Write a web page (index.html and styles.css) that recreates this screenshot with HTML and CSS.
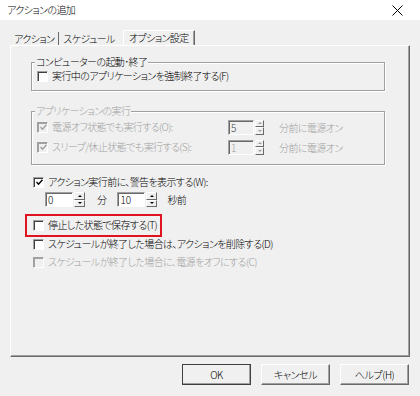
FILE: index.html
```html
<!DOCTYPE html>
<html lang="ja">
<head>
    <meta charset="UTF-8">
    <title>アクションの追加</title>
    <link rel="stylesheet" href="styles.css">
</head>
<body>
<div class="window">
    <div class="titlebar">
        <span class="title">アクションの追加</span>
        <svg class="close" width="11" height="11" viewBox="0 0 11 11"><path d="M0.5 0.5L10.5 10.5M10.5 0.5L0.5 10.5" stroke="#000" stroke-width="1"/></svg>
    </div>

    <div class="tabs">
        <span class="tab sep">アクション</span>
        <span class="tab">スケジュール</span>
        <span class="tab active">オプション設定</span>
    </div>

    <div class="panel">
        <fieldset class="group first">
            <legend>コンピューターの起動･終了</legend>
            <label class="check"><span class="box"></span>実行中のアプリケーションを強制終了する(F)</label>
        </fieldset>

        <fieldset class="group second disabled">
            <legend>アプリケーションの実行</legend>
            <div class="grow">
                <label class="check"><span class="box checked"><svg width="7" height="7" viewBox="0 0 7 7"><path d="M0.5 3L2.5 5.2L6.5 0.8" fill="none" stroke="#a0a0a0" stroke-width="1.4"/></svg></span>電源オフ状態でも実行する(O):</label>
                <span class="spin small"><span class="edit dark">5</span><span class="arrows"><i class="up"></i><i class="down"></i></span></span>
                <span class="unit">分前に電源オン</span>
            </div>
            <div class="grow">
                <label class="check"><span class="box checked"><svg width="7" height="7" viewBox="0 0 7 7"><path d="M0.5 3L2.5 5.2L6.5 0.8" fill="none" stroke="#a0a0a0" stroke-width="1.4"/></svg></span>スリープ/休止状態でも実行する(S):</label>
                <span class="spin small"><span class="edit">1</span><span class="arrows"><i class="up"></i><i class="down"></i></span></span>
                <span class="unit">分前に電源オン</span>
            </div>
        </fieldset>

        <label class="check line warn"><span class="box"><svg width="7" height="7" viewBox="0 0 7 7"><path d="M0.5 3L2.5 5.2L6.5 0.8" fill="none" stroke="#000" stroke-width="1.4"/></svg></span>アクション実行前に、警告を表示する(W):</label>

        <div class="timer">
            <span class="spin"><span class="edit">0</span><span class="arrows"><i class="up"></i><i class="down"></i></span></span>
            <span class="lbl-min">分</span>
            <span class="spin"><span class="edit">10</span><span class="arrows"><i class="up"></i><i class="down"></i></span></span>
            <span class="lbl-sec">秒前</span>
        </div>

        <div class="mark">
            <label class="check"><span class="box"></span>停止した状態で保存する(T)</label>
        </div>

        <label class="check line"><span class="box"></span>スケジュールが終了した場合は、アクションを削除する(D)</label>
        <label class="check line off last"><span class="box"></span>スケジュールが終了した場合に、電源をオフにする(C)</label>
    </div>

    <div class="buttons">
        <button class="btn default">OK</button>
        <button class="btn">キャンセル</button>
        <button class="btn">ヘルプ(H)</button>
    </div>
</div>
</body>
</html>
```

FILE: styles.css
```css
body { margin: 0; font-family: "Noto Sans CJK JP", sans-serif; font-size: 10px; font-weight: 300; letter-spacing: -0.6px; font-feature-settings: "palt"; color: #000; }
.window { width: 420px; height: 396px; background: #f0f0f0; overflow: hidden; }

.titlebar { height: 20px; background: #fff; display: flex; align-items: center; justify-content: space-between; padding: 0 17px 0 7px; }
.title { line-height: 12px; }

.tabs { display: flex; align-items: flex-end; height: 15px; margin: 10px 0 0 10px; }
.tab { line-height: 13px; padding: 0 4px; }
.tab.sep { border-right: 1px solid #696969; }
.tab.active { line-height: 14px; padding: 0 5px; margin-left: 4px; border-left: 1px solid #fff; border-top: 1px solid #fff; border-right: 1px solid #696969; box-shadow: inset -1px 0 #a0a0a0; }

.panel { margin: 0 10px; height: 312px; box-sizing: border-box; padding: 0 0 0 20px; border-style: solid; border-width: 1px; border-color: #fff #696969 #696969 #fff; box-shadow: inset -1px -1px #a0a0a0; }

.group { margin: 0; padding: 0 0 7px 0; width: 354px; box-sizing: border-box; border: 1px solid #a0a0a0; box-shadow: inset 1px 1px #fff, 1px 1px #fff; min-width: 0; }
.group legend { margin-left: 3px; padding: 0 1px; line-height: 12px; background: #f0f0f0; }
.group.first { margin-top: 10px; }
.group.first .check { margin-top: 1px; }
.group.second { margin-top: 14px; padding-bottom: 9px; }
.group .check { margin-left: 5px; }
.disabled, .disabled legend { color: #a0a0a0; }

.check { display: flex; align-items: center; height: 14px; line-height: 14px; white-space: nowrap; }
.box { flex-shrink: 0; width: 9px; height: 9px; margin-right: 4px; background: #fff; border: 1px solid; border-color: #a0a0a0 #fff #fff #a0a0a0; box-shadow: inset 1px 1px #404040; display: flex; align-items: center; justify-content: center; }
.box svg { margin: 1px 0 0 1px; }
.disabled .box, .off .box { background: #f0f0f0; box-shadow: inset 1px 1px #a0a0a0; }
.off { color: #a0a0a0; }

.grow { display: grid; grid-template-columns: 196px max-content 1fr; align-items: center; height: 16px; margin-top: 4px; }
.grow:first-of-type { margin-top: 2px; }
.grow .unit { margin-left: 15px; }

.spin { display: flex; gap: 1px; }
.edit { width: 24px; height: 11px; line-height: 12px; padding: 1px 0 1px 2px; background: #fff; border: 1px solid; border-color: #a0a0a0 #fff #fff #a0a0a0; box-shadow: inset 1px 1px #696969; font-size: 10px; letter-spacing: 0; }
.spin.small .edit { width: 22px; background: #f0f0f0; color: #a0a0a0; }
.spin.small .edit.dark { color: #444; }
.arrows { display: flex; flex-direction: column; width: 11px; }
.spin.small .arrows { width: 9px; }
.arrows i { flex: 1; position: relative; border: 1px solid; border-color: #fff #696969 #696969 #fff; background: #f0f0f0; }
.arrows i::after { content: ""; position: absolute; left: 50%; top: 50%; margin: -1px 0 0 -2px; border: 2px solid transparent; }
.arrows .up::after { border-bottom-color: #000; border-top-width: 0; }
.arrows .down::after { border-top-color: #000; border-bottom-width: 0; }
.disabled .arrows .up::after { border-bottom-color: #a0a0a0; }
.disabled .arrows .down::after { border-top-color: #a0a0a0; }

.line { margin-left: 2px; }
.warn { margin-top: 10px; }

.timer { display: flex; align-items: center; height: 15px; margin: 3px 0 0 14px; }
.lbl-min { margin: 0 11px 0 12px; }
.lbl-sec { margin-left: 10px; }

.mark { margin: 7px 0 0 -6px; width: 137px; box-sizing: border-box; border: 2px solid #e0141e; padding: 2px 0 3px 6px; }
.last { margin-top: 4px; }

.buttons { display: flex; justify-content: flex-end; gap: 10px; margin-top: 7px; padding-right: 11px; }
.btn { width: 69px; height: 21px; padding: 0; font: inherit; letter-spacing: -0.4px; font-feature-settings: "palt"; color: #000; background: #f0f0f0; border: 1px solid; border-color: #fff #696969 #696969 #fff; box-shadow: inset -1px -1px #a0a0a0; }
.btn.default { outline: 1px solid #404040; outline-offset: -1px; border-color: #fff #404040 #404040 #fff; }
```
